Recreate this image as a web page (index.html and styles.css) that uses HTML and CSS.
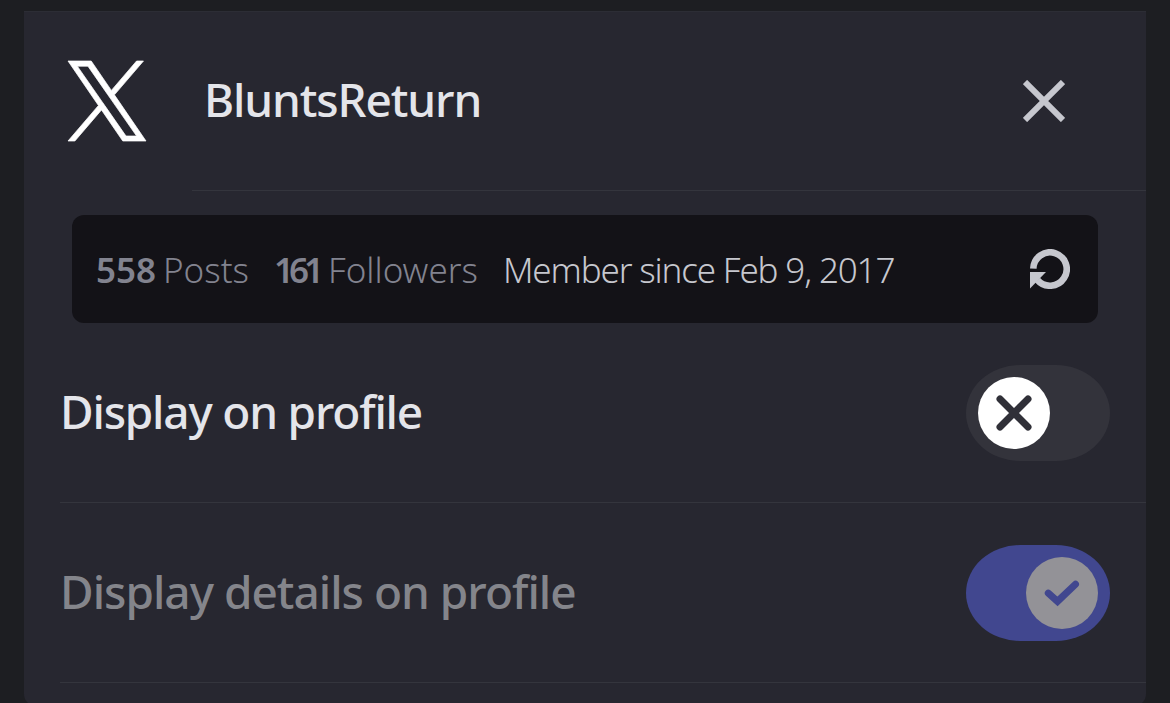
FILE: index.html
```html
<!DOCTYPE html>
<html lang="en">
<head>
    <meta charset="UTF-8">
    <meta name="viewport" content="width=device-width, initial-scale=1.0">
    <title>Connections</title>
    <link rel="stylesheet" href="styles.css">
</head>
<body>
    <section class="card">
        <header class="account">
            <svg class="logo" viewBox="0.258 0 23.484 24" preserveAspectRatio="none">
                <path fill="#fff" stroke="#fff" stroke-width="0.22" d="M14.234 10.162 22.977 0h-2.072l-7.591 8.824L7.251 0H.258l9.168 13.343L.258 24H2.33l8.016-9.318L16.749 24h6.993zm-2.837 3.299-.929-1.329L3.076 1.56h3.182l5.965 8.532.929 1.329 7.754 11.09h-3.182z"/>
            </svg>
            <div class="account-main">
                <h1>BluntsReturn</h1>
                <button type="button" class="close" aria-label="Remove">
                    <svg width="42" height="42" viewBox="0 0 42 42">
                        <path d="M2 2 40 40M40 2 2 40" stroke="#c6c7ce" stroke-width="6"/>
                    </svg>
                </button>
            </div>
        </header>

        <div class="stats">
            <span class="stat posts"><b>558</b><span>Posts</span></span>
            <span class="stat followers"><b>161</b><span>Followers</span></span>
            <span class="since">Member since Feb 9, 2017</span>
            <button type="button" class="refresh" aria-label="Refresh">
                <svg width="40" height="40" viewBox="0 0 40 40">
                    <path fill="none" stroke="#c6c7ce" stroke-width="6.6" d="M3.3 19.6A16.7 16.7 0 1 1 7.4 31"/>
                    <path fill="#c6c7ce" d="M0 23h16L0 39.5z"/>
                </svg>
            </button>
        </div>

        <div class="row">
            <h2 class="title">Display on profile</h2>
            <div class="toggle" role="switch" aria-checked="false">
                <div class="knob">
                    <svg width="72" height="72" viewBox="0 0 72 72">
                        <path d="M22 22 50 50M50 22 22 50" stroke="#303038" stroke-width="7" stroke-linecap="round"/>
                    </svg>
                </div>
            </div>
        </div>

        <div class="row">
            <h2 class="title details">Display details on profile</h2>
            <div class="toggle on" role="switch" aria-checked="true" aria-disabled="true">
                <div class="knob">
                    <svg width="72" height="72" viewBox="0 0 72 72">
                        <path d="M22.3 36.2 31.5 44.4 49.5 27.2" fill="none" stroke="#41478f" stroke-width="7" stroke-linecap="round"/>
                    </svg>
                </div>
            </div>
        </div>
    </section>
</body>
</html>
```

FILE: styles.css
```css
* {
    box-sizing: border-box;
}

body {
    margin: 0;
    padding: 11px 24px 0;
    height: 703px;
    overflow: hidden;
    background-color: #1d1e22;
    font-family: "Noto Sans", sans-serif;
    color: #e4e5ea;
}

h1, h2 {
    margin: 0;
    padding-bottom: 4px;
    font-size: 46px;
    font-weight: 500;
    line-height: 1;
    white-space: nowrap;
}

button {
    display: flex;
    padding: 0;
    border: none;
    background: none;
    cursor: pointer;
}

svg {
    display: block;
}

.card {
    height: 695px;
    background-color: #272730;
    border-top: 1px solid #2c2d35;
    border-radius: 0 0 12px 12px;
}

.account {
    display: flex;
    height: 179px;
    padding-left: 44px;
}

.logo {
    width: 78px;
    height: 80px;
    margin-top: 49px;
    overflow: visible;
}

.account-main {
    display: flex;
    flex: 1;
    align-items: center;
    justify-content: space-between;
    margin-left: 46px;
    padding: 0 81px 0 12px;
    border-bottom: 1px solid #34353d;
}

.account-main h1 {
    letter-spacing: -1.1px;
}

.stats {
    display: flex;
    align-items: center;
    height: 108px;
    margin: 24px 48px 0;
    padding: 0 28px 0 24px;
    border-radius: 12px;
    background-color: #131217;
    font-size: 35px;
    font-weight: 300;
    line-height: 1;
    white-space: nowrap;
}

.stat {
    display: flex;
    color: #82838f;
}

.stat b {
    font-weight: 600;
}

.posts {
    width: 178px;
}

.posts b {
    width: 67px;
}

.followers {
    width: 229px;
}

.followers b {
    width: 54px;
    letter-spacing: -5px;
}

.since {
    color: #c6c7ce;
    letter-spacing: -1.15px;
}

.refresh {
    margin-left: auto;
}

.row {
    display: flex;
    align-items: center;
    justify-content: space-between;
    height: 180px;
    margin-left: 36px;
    padding-right: 36px;
    border-bottom: 1px solid #34353d;
}

.title {
    letter-spacing: -1.2px;
}

.details {
    color: #84858b;
    letter-spacing: -1px;
}

.toggle {
    display: flex;
    width: 144px;
    height: 96px;
    padding: 12px;
    border-radius: 54px / 48px;
    background-color: #33333b;
}

.knob {
    width: 72px;
    height: 72px;
    border-radius: 50%;
    background-color: #fff;
}

.toggle.on {
    justify-content: flex-end;
    background-color: #41478f;
}

.toggle.on .knob {
    background-color: #939297;
}
```
